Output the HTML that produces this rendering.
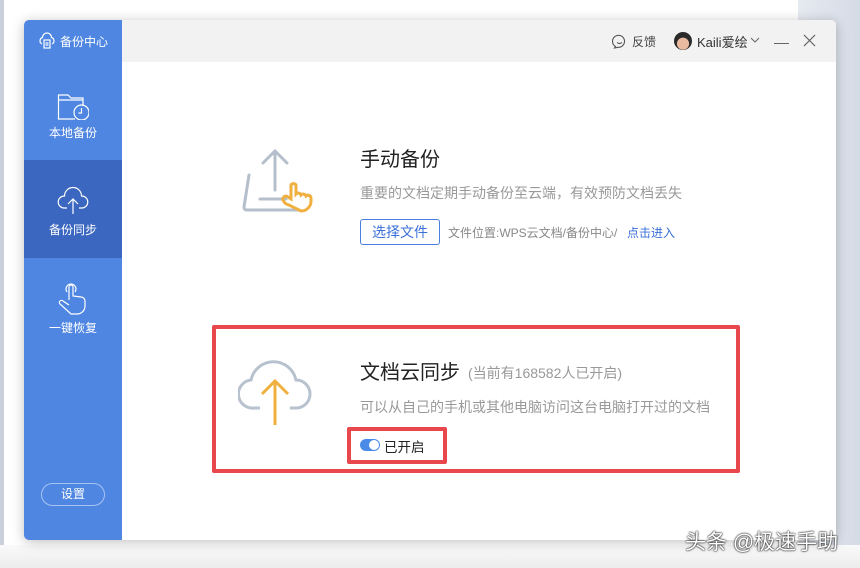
<!DOCTYPE html>
<html><head><meta charset="utf-8"><style>
*{margin:0;padding:0;box-sizing:border-box}
body{width:860px;height:568px;overflow:hidden;background:#fff;font-family:"Liberation Sans","Noto Sans CJK SC",sans-serif;position:relative}
.rs{position:absolute;left:798px;top:0;width:62px;height:568px;background:linear-gradient(90deg,#e6eaf1,#d5dbe6)}
.ls{position:absolute;left:0;top:0;width:4px;height:568px;background:#c9d0dc}
.bot{position:absolute;left:0;top:545px;width:860px;height:23px;background:linear-gradient(#fafafa,#ececec)}
.win{position:absolute;left:24px;top:20px;width:812px;height:520px;background:#fff;border-radius:5px;overflow:hidden;box-shadow:0 2px 12px rgba(0,0,0,.25)}
.side{position:absolute;left:0;top:0;width:98px;height:520px;background:#4f86e2;color:#fff}
.act{position:absolute;left:0;top:140px;width:98px;height:98px;background:#3b67c0}
.it{position:absolute;left:0;width:98px;text-align:center;font-size:12px}
.title{position:absolute;left:98px;top:0;width:714px;height:42px;background:#f2f2f2}
.t{position:absolute;white-space:nowrap}
</style></head><body>
<div class="ls"></div><div class="rs"></div><div class="bot"></div>
<div class="win">
 <div class="side">
  <div class="act"></div>
  <svg class="t" style="left:14px;top:12px" width="18" height="18" viewBox="0 0 18 18" fill="none" stroke="#fff" stroke-width="1.2"><path d="M4 12A3.5 3.5 0 0 1 4.5 5.5A4.5 4.5 0 0 1 13.5 5.5A3.5 3.5 0 0 1 14 12"/><rect x="6" y="8" width="6" height="8"/><path d="M7.5 11h3M7.5 13h3"/></svg>
  <div class="t" style="left:36px;top:13px;font-size:12px">备份中心</div>
  <svg class="t" style="left:33px;top:68px" width="32" height="32" viewBox="0 0 32 32" fill="none" stroke="#fff" stroke-width="1.2"><path d="M26 18V10H14l-3-3H1.5v24H18"/><path d="M1.5 12H26"/><circle cx="24.5" cy="24.5" r="7.5"/><path d="M24.5 20v5h-3"/></svg>
  <div class="it" style="top:104px">本地备份</div>
  <svg class="t" style="left:33px;top:163px" width="32" height="32" viewBox="0 0 32 32" fill="none" stroke="#fff" stroke-width="1.2"><path d="M10 25H7A6 6 0 0 1 7.5 13A8.5 8.5 0 0 1 24.5 13A6 6 0 0 1 25 25H22"/><path d="M16 31V16M11 21l5-5 5 5"/></svg>
  <div class="it" style="top:201px">备份同步</div>
  <svg class="t" style="left:33px;top:260px" width="32" height="36" viewBox="0 0 32 36" fill="none" stroke="#fff" stroke-width="1.2"><path d="M10 12A5 5 0 1 1 18 12"/><path d="M12 20V7a2 2 0 0 1 4 0v9l8 1a4 4 0 0 1 4 4v5a8 8 0 0 1-8 8h-6L3 24a2 2 0 0 1 3-3l6 4"/></svg>
  <div class="it" style="top:299px">一键恢复</div>
  <div class="t" style="left:17px;top:463px;width:64px;height:23px;border:1px solid rgba(255,255,255,.5);border-radius:12px;text-align:center;line-height:21px;font-size:12px">设置</div>
 </div>
 <div class="title">
  <svg class="t" style="left:490px;top:14px" width="15" height="15" viewBox="0 0 15 15" fill="none" stroke="#555" stroke-width="1.1"><path d="M3.5 12.5A6 6 0 1 1 6 13.3L2.5 14z"/><path d="M5 8.5q2.5 2 5 0"/></svg>
  <div class="t" style="left:510px;top:13px;font-size:12px;color:#444">反馈</div>
  <div class="t" style="left:552px;top:12px;width:18px;height:18px;border-radius:50%;background:radial-gradient(circle at 50% 65%,#e9b9a0 40%,#2a2a2a 42%)"></div>
  <div class="t" style="left:575px;top:12px;font-size:13px;color:#333">Kaili爱绘</div>
  <svg class="t" style="left:628px;top:17px" width="10" height="6" viewBox="0 0 10 6" fill="none" stroke="#666"><path d="M1 1l4 4 4-4"/></svg>
  <div class="t" style="left:652px;top:23px;width:15px;height:1px;background:#666"></div>
  <svg class="t" style="left:681px;top:14px" width="13" height="13" viewBox="0 0 14 14" stroke="#666" stroke-width="1.2"><path d="M1 1l12 12M13 1L1 13"/></svg>
 </div>
 <svg class="t" style="left:217px;top:128px" width="76" height="66" viewBox="0 0 76 66" fill="none" stroke-linecap="round"><g stroke="#b5bfcc" stroke-width="3"><path d="M34 42V3M22 15L34 3 46 15"/><path d="M8 27L3 59q0 3 3 3h52"/><path d="M19 51h26"/></g><path d="M48 57a8 8 0 0 1-6-5 3 3 0 0 1 5-3l3 2V37a3 3 0 0 1 5 0v9a3 3 0 0 1 5 1 3 3 0 0 1 5 1 3 3 0 0 1 5 2v4a10 10 0 0 1-10 9z" stroke="#f0b040" stroke-width="3"/></svg>
 <div class="t" style="left:336px;top:123px;font-size:20px;color:#222">手动备份</div>
 <div class="t" style="left:336px;top:163px;font-size:14px;color:#999">重要的文档定期手动备份至云端，有效预防文档丢失</div>
 <div class="t" style="left:336px;top:199px;width:80px;height:26px;border:1px solid #4a80e0;border-radius:3px;color:#3a70d8;font-size:14px;text-align:center;line-height:24px">选择文件</div>
 <div class="t" style="left:424px;top:204px;font-size:12px;color:#888">文件位置:WPS云文档/备份中心/</div>
 <div class="t" style="left:603px;top:204px;font-size:12px;color:#3a70d8">点击进入</div>
 <div class="t" style="left:188px;top:305px;width:528px;height:148px;border:4px solid #e8474c;border-radius:2px"></div>
 <svg class="t" style="left:214px;top:333px" width="74" height="72" viewBox="0 0 74 72" fill="none" stroke-width="3"><path d="M22 55H16A14 14 0 0 1 13 27A23 23 0 0 1 58 27A14 14 0 0 1 58 55H52" stroke="#b8c2cf"/><path d="M37 72V28M24 41l13-13 13 13" stroke="#f0b040"/></svg>
 <div class="t" style="left:336px;top:336px;font-size:20px;color:#222">文档云同步</div>
 <div class="t" style="left:444px;top:343px;font-size:14px;color:#999">(当前有168582人已开启)</div>
 <div class="t" style="left:336px;top:377px;font-size:14px;color:#999">可以从自己的手机或其他电脑访问这台电脑打开过的文档</div>
 <div class="t" style="left:323px;top:407px;width:100px;height:37px;border:4px solid #e8474c;border-radius:2px"></div>
 <div class="t" style="left:336px;top:419px;width:20px;height:12px;border-radius:6px;background:#4a8be8"><div style="position:absolute;right:1px;top:1px;width:10px;height:10px;border-radius:50%;background:#fff"></div></div>
 <div class="t" style="left:360px;top:416px;font-size:13.5px;color:#222">已开启</div>
</div>
<div class="t" style="left:685px;top:526px;font-size:21px;color:#fff;text-shadow:0 0 2px #000,0 0 1px #000">头条 @极速手助</div>
</body></html>
